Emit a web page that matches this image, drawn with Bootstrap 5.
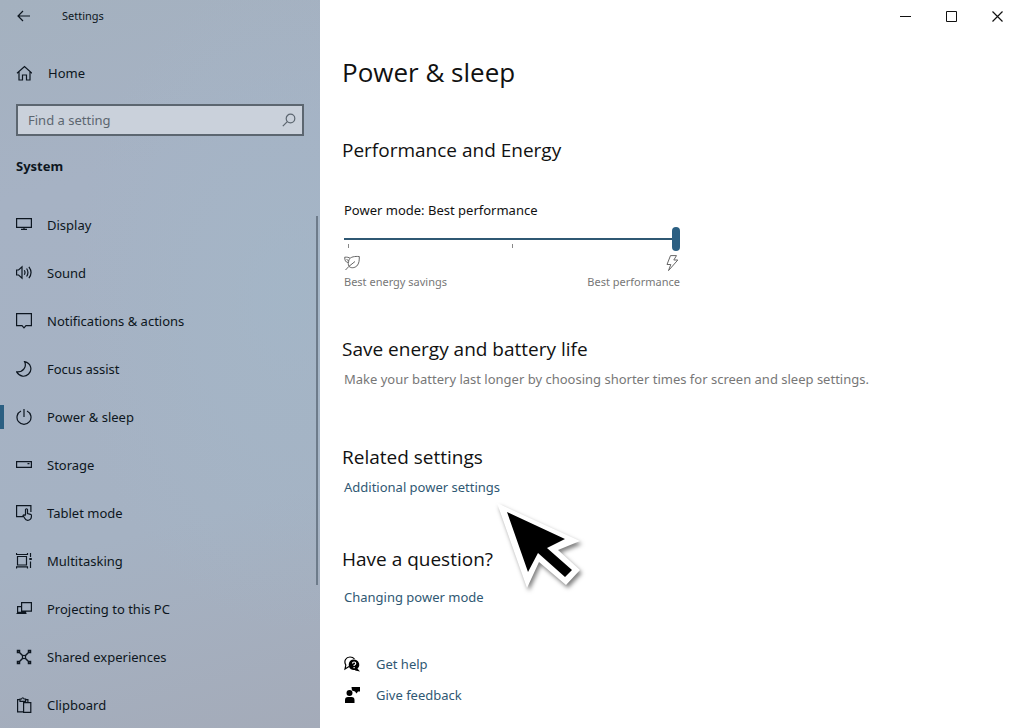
<!DOCTYPE html>
<html lang="en">
<head>
<meta charset="utf-8">
<meta name="viewport" content="width=device-width, initial-scale=1">
<title>Settings</title>
<link href="https://cdn.jsdelivr.net/npm/bootstrap@5.3.0/dist/css/bootstrap.min.css" rel="stylesheet">
<style>
  body { font-family: "Noto Sans", "Open Sans", sans-serif; font-size: 13px; line-height: 20px; color: #111; background: #fff; }
  svg { display: block; flex: none; fill: none; stroke: currentColor; stroke-width: 1.2; }
  a { color: #2f5873; text-decoration: none; }

  /* Sidebar */
  .side { width: 320px; color: #0d1620;
    background:
      radial-gradient(ellipse 220px 330px at 290px 300px, rgba(163,183,200,.7), rgba(163,183,200,0)),
      linear-gradient(165deg, #a4b1bf 0%, #a6b2c4 25%, #a5b2c3 70%, #a4abb9 100%); }
  .title-row { height: 32px; font-size: 11px; gap: 30px; }
  .plain-btn { border: 0; background: none; padding: 0; color: inherit; }
  .home-row { height: 48px; margin-top: 17px; color: inherit; }
  .search { height: 32px; margin-top: 7px; padding: 0 6px 0 10px; border: 2px solid #5c6670; background: #cad1db; color: #5c6670; }
  .search input { font-size: 13px; line-height: 20px; color: #333; }
  .search input::placeholder { color: #5c6670; opacity: 1; }
  .side .section-name { font-family: inherit; font-size: 13px; line-height: 20px; margin-top: 20px; margin-bottom: 25px; font-weight: 700; }
  .side-list { min-height: 0; }
  .side-item { height: 48px; flex: none; padding: 0 16px; gap: 15px; color: inherit; }
  .side-item.current::before { content: ""; position: absolute; left: 0; top: 12px; width: 4px; height: 24px; background: #2b5f82; }
  .thumb-line { position: absolute; right: 2px; top: 15px; width: 2px; height: 70%; background: #6d7b8a; }

  /* Content */
  .caption-row { height: 32px; }
  .caption-row button { width: 46px; }
  .pane { padding: 20px 24px 16px 22px; }
  h1, h2 { font-family: "Open Sans", "Noto Sans", sans-serif; font-weight: 400; }
  h1 { font-size: 26px; line-height: 40px; margin: 0 0 44px; }
  h2 { font-size: 19px; line-height: 28px; margin: 0; }
  .indent { padding-left: 2px; }
  .mode-label { margin-top: 36px; }
  .power-slider { width: 336px; margin-top: 7px; }
  .power-slider input { -webkit-appearance: none; appearance: none; display: block; width: 100%; height: 24px; margin: 0; background: none; }
  .power-slider input::-webkit-slider-runnable-track { height: 2px; background: #2f5873; }
  .power-slider input::-webkit-slider-thumb { -webkit-appearance: none; width: 8px; height: 24px; margin-top: -11px; border-radius: 4px; background: #2b5f82; }
  .tick { position: absolute; top: 17px; width: 1px; height: 4px; background: #888; }
  .ends { font-size: 11px; line-height: 16px; color: #777; margin-top: 4px; }
  .ends svg { color: #666; margin-bottom: 3px; }
  .block { margin-top: 45px; }
  .hint { color: #777; margin: 6px 0 0; }
  .related { margin-top: 54px; }
  .related-link { margin-top: 6px; }
  .pointer { position: absolute; left: 151px; top: 20px; stroke: none; pointer-events: none; filter: drop-shadow(2px 3px 2px rgba(0,0,0,.5)); }
  .question { margin-top: 48px; }
  .question-link { margin-top: 14px; }
  .help-links { margin-top: 47px; gap: 11px; color: #000; }
  .help-links div { gap: 16px; }
</style>
</head>
<body>
<div class="d-flex min-vh-100">
  <aside class="side vh-100 flex-shrink-0 d-flex flex-column overflow-hidden sticky-top">
    <div class="title-row d-flex align-items-center px-3">
      <button class="plain-btn" type="button" aria-label="Back"><svg width="16" height="16" viewBox="0 0 16 16"><path d="M2 8h12M7 3L2 8l5 5"/></svg></button>
      <span>Settings</span>
    </div>
    <a class="home-row d-flex align-items-center px-3 gap-3" href="#">
      <svg width="16" height="16" viewBox="0 0 16 16"><path d="M1 8.3L8.500 1.500 16 8.300M3 7v8h3.500v-5h4v5H14V7"/></svg>Home
    </a>
    <div class="search d-flex align-items-center mx-3">
      <input class="form-control border-0 shadow-none bg-transparent p-0" type="text" placeholder="Find a setting" aria-label="Find a setting">
      <svg width="14" height="14" viewBox="0 0 14 14"><circle cx="8.500" cy="5.500" r="4.300"/><path d="M5.300 8.600L.8 13.200"/></svg>
    </div>
    <h2 class="section-name px-3">System</h2>
    <div class="side-list position-relative flex-grow-1">
      <nav class="h-100 d-flex flex-column overflow-hidden" aria-label="System">
        <a class="side-item d-flex align-items-center" href="#"><svg width="16" height="16" viewBox="0 0 16 16"><path d="M.6 1.600h14.800v8.800H.600zM8 10.500v2M5 12.400h6"/></svg>Display</a>
        <a class="side-item d-flex align-items-center" href="#"><svg width="16" height="16" viewBox="0 0 16 16"><path d="M.6 5h2L6 1.900v11.200L2.600 10h-2zM8.300 5.300q1.400 2.200 0 4.400M10.600 3.500q2.700 4 0 8M12.900 1.800q4.300 5.700 0 11.400"/></svg>Sound</a>
        <a class="side-item d-flex align-items-center" href="#"><svg width="16" height="16" viewBox="0 0 16 16"><path d="M.6.600h14.800v12H10L8 14.800 6 12.600H.600z"/></svg>Notifications &amp; actions</a>
        <a class="side-item d-flex align-items-center" href="#"><svg width="16" height="16" viewBox="0 0 16 16"><path d="M8.600.700c2.400 5-1.400 10.800-8 10.200C3.600 15.800 9 16.600 12.600 13 16.800 8.800 15 2.200 8.600.700z"/></svg>Focus assist</a>
        <a class="side-item current position-relative d-flex align-items-center" href="#" aria-current="page"><svg width="16" height="16" viewBox="0 0 16 16"><path d="M5 2a7 7 0 1 0 6 0M8 0v8"/></svg>Power &amp; sleep</a>
        <a class="side-item d-flex align-items-center" href="#"><svg width="16" height="16" viewBox="0 0 16 16"><path d="M.6 4.600h14.800v5.800H.600zM11.500 6.700h2"/></svg>Storage</a>
        <a class="side-item d-flex align-items-center" href="#"><svg width="16" height="16" viewBox="0 0 16 16"><path d="M7 11.600H.600v-11h14.300V7M9.500 10V4.500q1-1.500 2 0V8.500l3 .8q1 .4 1 1.500-.1 4.400-3.800 4.500-2 0-3-2L7 10.600q.8-1.500 2.500.2"/></svg>Tablet mode</a>
        <a class="side-item d-flex align-items-center" href="#"><svg width="16" height="16" viewBox="0 0 16 16"><path d="M1.500 3.500h9v8.500h-9zM.5 0v1.500h11V0M.5 15.500v-1.700h11v1.700M14.500 0v4M14.500 8.500V15"/><path d="M13.300 5h2.500v2h-2.500z" fill="currentColor" stroke="none"/></svg>Multitasking</a>
        <a class="side-item d-flex align-items-center" href="#"><svg width="16" height="16" viewBox="0 0 16 16"><path d="M5.600 1.600h9.800v8.500H5.600zM5.600 5.600h-4v5.800h8v-1.300M.5 12.500h10"/></svg>Projecting to this PC</a>
        <a class="side-item d-flex align-items-center" href="#"><svg width="16" height="16" viewBox="0 0 16 16"><path d="M3 3l4 4M13 3L9 7M3 13l4-4M13 13L9 9M1.500 1.500h2v2h-2zM12.500 1.500h2v2h-2zM1.500 12.500h2v2h-2zM12.500 12.500h2v2h-2z" stroke-width="1.500"/><circle cx="8" cy="8" r="1.700"/></svg>Shared experiences</a>
        <a class="side-item d-flex align-items-center" href="#"><svg width="16" height="16" viewBox="0 0 16 16"><path d="M7 14.900H1.600V2.600H4M9.500 2.600h2.400V5M4 4.300V2h1.500q1.300-2.500 2.600 0h1.500v2.300zM7.600 5.600h7.200v9.800H7.600z"/></svg>Clipboard</a>
      </nav>
      <div class="thumb-line"></div>
    </div>
  </aside>

  <main class="flex-grow-1">
    <div class="caption-row d-flex justify-content-end">
      <button class="plain-btn d-flex align-items-center justify-content-center" type="button" aria-label="Minimize"><svg width="11" height="11" viewBox="0 0 11 11"><path d="M0 5.500h11" stroke-width="1"/></svg></button>
      <button class="plain-btn d-flex align-items-center justify-content-center" type="button" aria-label="Maximize"><svg width="11" height="11" viewBox="0 0 11 11"><path d="M.5.500h10v10H.500z" stroke-width="1"/></svg></button>
      <button class="plain-btn d-flex align-items-center justify-content-center" type="button" aria-label="Close"><svg width="11" height="11" viewBox="0 0 11 11"><path d="M.5.500l10 10M10.500.500l-10 10"/></svg></button>
    </div>
    <div class="pane">
      <h1>Power &amp; sleep</h1>

      <section>
        <h2>Performance and Energy</h2>
        <div class="indent">
          <label class="mode-label d-block" for="mode">Power mode: Best performance</label>
          <div class="power-slider position-relative">
            <input id="mode" type="range" min="0" max="2" value="2">
            <span class="tick" style="left:4px"></span>
            <span class="tick" style="left:168px"></span>
            <div class="ends d-flex justify-content-between">
              <div>
                <svg width="16" height="16" viewBox="0 0 16 16"><path d="M1.500 15L5 11.300 11 6.500M5 11.300C7 13.500 10.500 13 12.800 11 15.300 8.500 15.300 5 15.300 1.500 11 1.300 6.500 1.500 5 4.800 4 7.500 4 9.500 5 11.300M4.300 7.500C1.500 7.500.700 5 .7 2.200 3 2 4.800 2.300 6 3.300M2.500 4l2.300 2.300" stroke-width="1"/></svg>
                Best energy savings
              </div>
              <div class="d-flex flex-column align-items-end">
                <svg width="16" height="16" viewBox="0 0 16 16"><path d="M6.500.600h6L9.800 5h4L4.500 15.600l2.300-6.100H3z" stroke-width="1"/></svg>
                Best performance
              </div>
            </div>
          </div>
        </div>
      </section>

      <section class="block">
        <h2>Save energy and battery life</h2>
        <p class="hint indent">Make your battery last longer by choosing shorter times for screen and sleep settings.</p>
      </section>

      <section class="related">
        <h2>Related settings</h2>
        <div class="related-link indent position-relative">
          <a href="#">Additional power settings</a>
          <svg class="pointer" width="92" height="92" viewBox="494 497 92 92" aria-hidden="true">
            <path fill="#fff" d="M498 503L581 541 559 550 581 570 567 585 540 562 528 588z"/>
            <path fill="#000" d="M508 512L566 539 548 548 573 570 566 577 539 553 529 572z"/>
          </svg>
        </div>
      </section>

      <section class="question">
        <h2>Have a question?</h2>
        <div class="question-link indent"><a href="#">Changing power mode</a></div>
      </section>

      <div class="help-links indent d-flex flex-column">
        <div class="d-flex align-items-center">
          <svg width="16" height="16" viewBox="0 0 16 16"><path d="M5 10.500L1 13l.8-4C-.5 5 2 1 6 1q3 0 4.500 2"/><path d="M10 3.500a5.300 5.300 0 1 1-1 10.500 5.300 5.300 0 0 1 1-10.500zM13 12l3 3.500-5-1z" fill="currentColor" stroke="none"/><path d="M8.500 7.500q0-1.500 1.600-1.500t1.600 1.400q0 1-1.600 1.800v.8M10.100 11v1.200" stroke="#fff"/></svg>
          <a href="#">Get help</a>
        </div>
        <div class="d-flex align-items-center">
          <svg width="16" height="16" viewBox="0 0 16 16"><path d="M7.500 0H16v4.500h-2l-1.500 2-1.500-2L8 3.500zM5.500 3a3 3 0 1 1 0 6 3 3 0 0 1 0-6zM1 16v-3q0-3 3-3h3.500q3 0 3 3v3z" fill="currentColor" stroke="none"/></svg>
          <a href="#">Give feedback</a>
        </div>
      </div>
    </div>
  </main>
</div>
<script src="https://cdn.jsdelivr.net/npm/bootstrap@5.3.0/dist/js/bootstrap.bundle.min.js"></script>
</body>
</html>
